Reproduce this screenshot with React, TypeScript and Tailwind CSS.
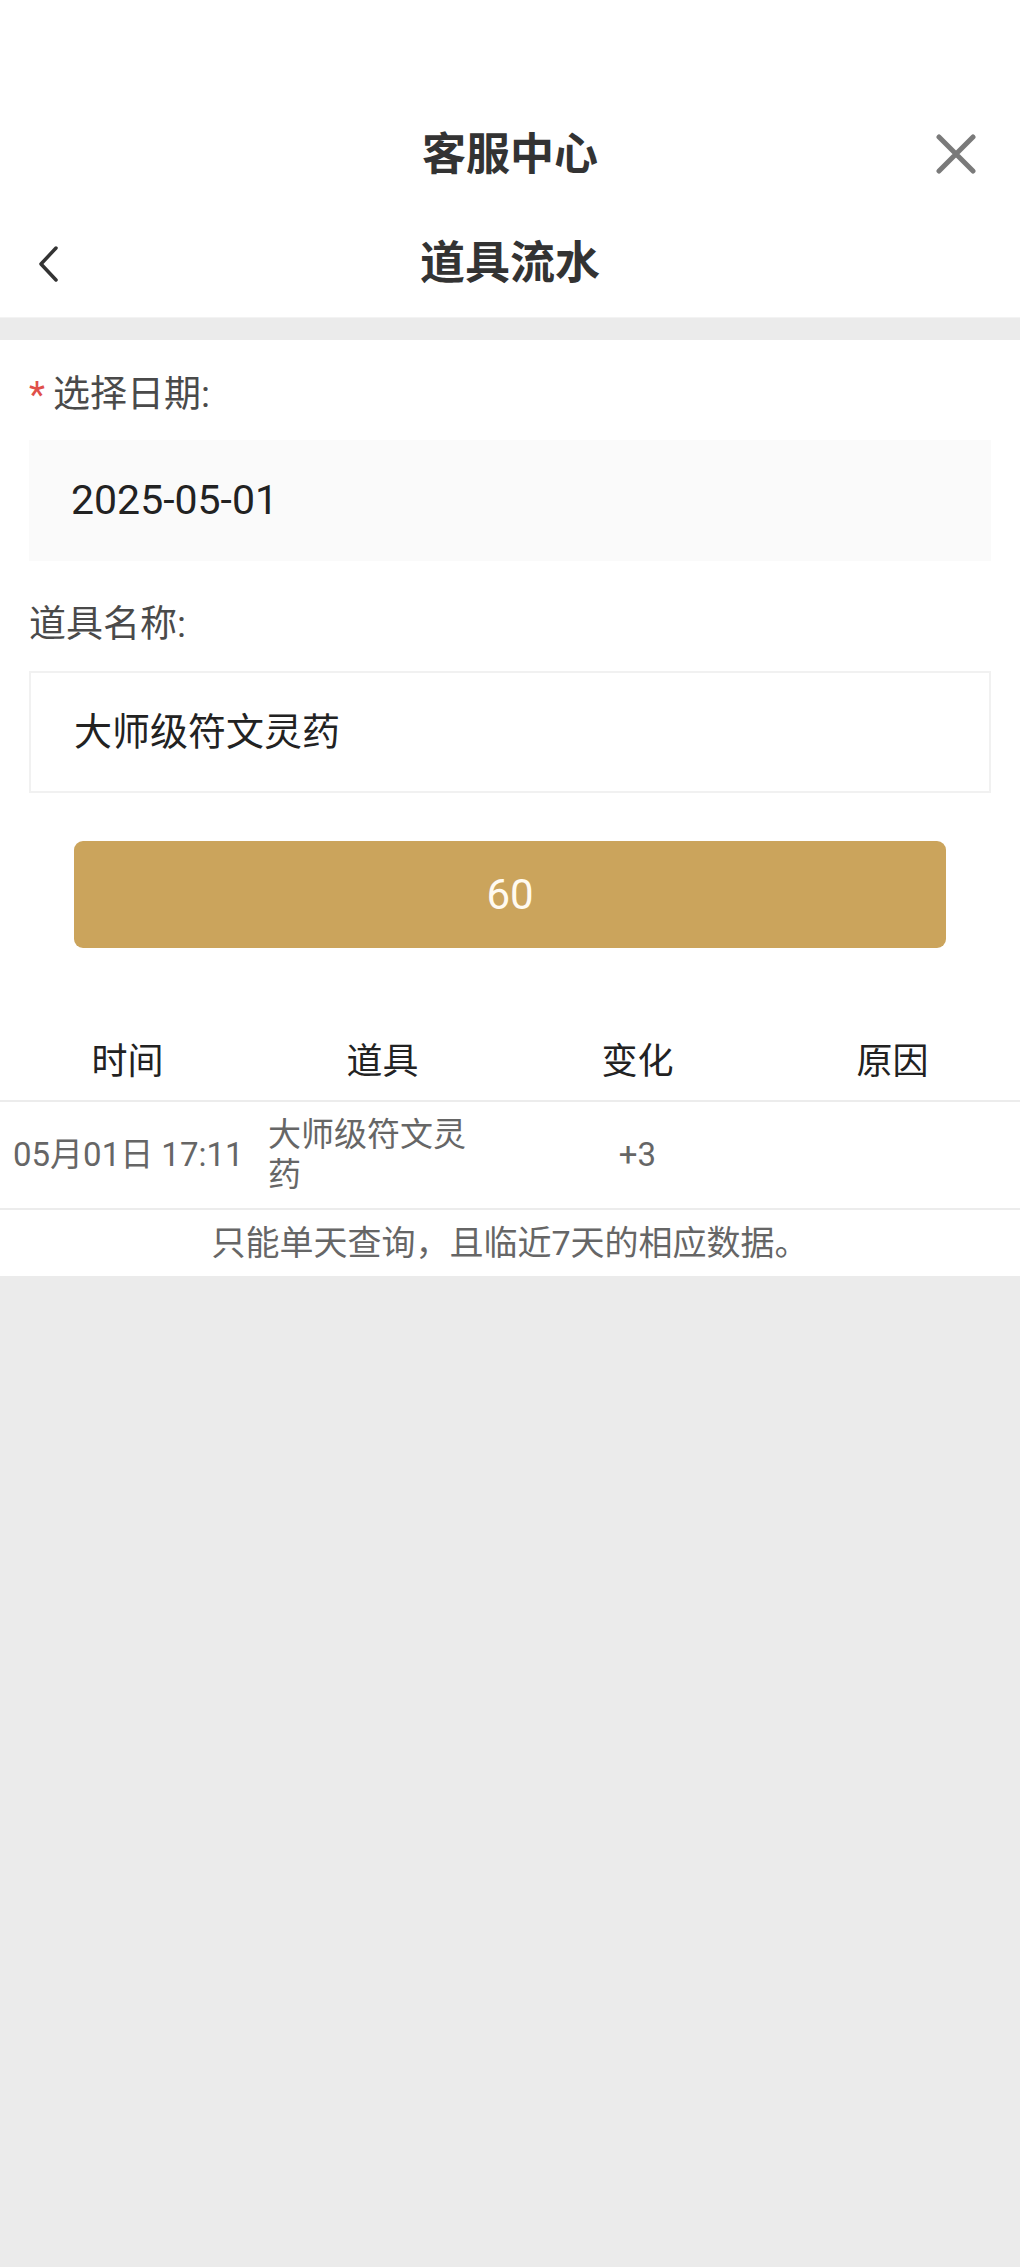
import React from 'react';

const font = { fontFamily: 'Roboto, "Noto Sans CJK SC", sans-serif' };

const rows = [
  { time: '05月01日 17:11', item: '大师级符文灵药', change: '+3', reason: '' },
];

const App: React.FC = () => {
  return (
    <div className="min-h-[2267px] w-[1020px] bg-[#ebebeb]" style={font}>
      {/* Header */}
      <div className="bg-white pt-[100px]">
        <div className="relative flex h-[110px] items-center justify-center">
          <span className="text-[44px] font-bold text-[#333]">客服中心</span>
          <svg
            className="absolute right-[44px] top-[34px]"
            width="40"
            height="40"
            viewBox="0 0 40 40"
            fill="none"
            stroke="#7a7a7a"
            strokeWidth="5"
            strokeLinecap="round"
          >
            <path d="M3 3 L37 37 M37 3 L3 37" />
          </svg>
        </div>
        <div className="relative flex h-[108px] items-center justify-center border-b border-[#f3f3f3]">
          <svg
            className="absolute left-[38px] top-[36px]"
            width="22"
            height="36"
            viewBox="0 0 22 36"
            fill="none"
            stroke="#333"
            strokeWidth="3.5"
            strokeLinecap="round"
            strokeLinejoin="round"
          >
            <path d="M18 2 L3 18 L18 34" />
          </svg>
          <span className="text-[45px] font-bold text-[#333]">道具流水</span>
        </div>
      </div>

      <div className="h-[22px]" />

      {/* Form */}
      <div className="bg-white">
        <div className="px-[29px] pt-[31px]">
          <div className="flex h-[48px] items-center text-[37px] text-[#4a4a4a]">
            <span className="mr-[8px] text-[#e0504a]">*</span>
            选择日期:
          </div>
          <div className="mt-[21px] flex h-[121px] items-center bg-[#fafafa] px-[42px] text-[41px] text-[#222]">
            2025-05-01
          </div>

          <div className="mt-[40px] flex h-[48px] items-center text-[37px] text-[#4a4a4a]">道具名称:</div>
          <div className="mt-[22px] flex h-[122px] items-center border-2 border-[#f1f1f1] bg-white px-[43px] text-[38px] text-[#222]">
            大师级符文灵药
          </div>
        </div>

        <div className="px-[74px] pt-[48px]">
          <button className="flex h-[107px] w-full items-center justify-center rounded-[9px] bg-[#cba45c] text-[42px] text-[#fffaf0]">
            60
          </button>
        </div>

        {/* Table */}
        <table className="mt-[75px] w-full table-fixed border-collapse">
          <thead>
            <tr className="h-[78px] border-b-2 border-[#ececec]">
              <th className="w-1/4 text-[36px] font-normal text-[#222]">时间</th>
              <th className="w-1/4 text-[36px] font-normal text-[#222]">道具</th>
              <th className="w-1/4 text-[36px] font-normal text-[#222]">变化</th>
              <th className="w-1/4 text-[36px] font-normal text-[#222]">原因</th>
            </tr>
          </thead>
          <tbody>
            {rows.map((r, i) => (
              <tr key={i} className="h-[108px] border-b-2 border-[#ececec] text-[#666]">
                <td className="px-[13px] text-left text-[33px] whitespace-nowrap">{r.time}</td>
                <td className="px-[13px] text-left text-[33px] leading-[40px]">{r.item}</td>
                <td className="px-[13px] text-center text-[33px]">{r.change}</td>
                <td className="px-[13px] text-center text-[33px]">{r.reason}</td>
              </tr>
            ))}
          </tbody>
        </table>

        <div className="flex h-[66px] items-center justify-center text-[34px] text-[#666]">
          只能单天查询，且临近7天的相应数据。
        </div>
      </div>
    </div>
  );
};

export default App;
